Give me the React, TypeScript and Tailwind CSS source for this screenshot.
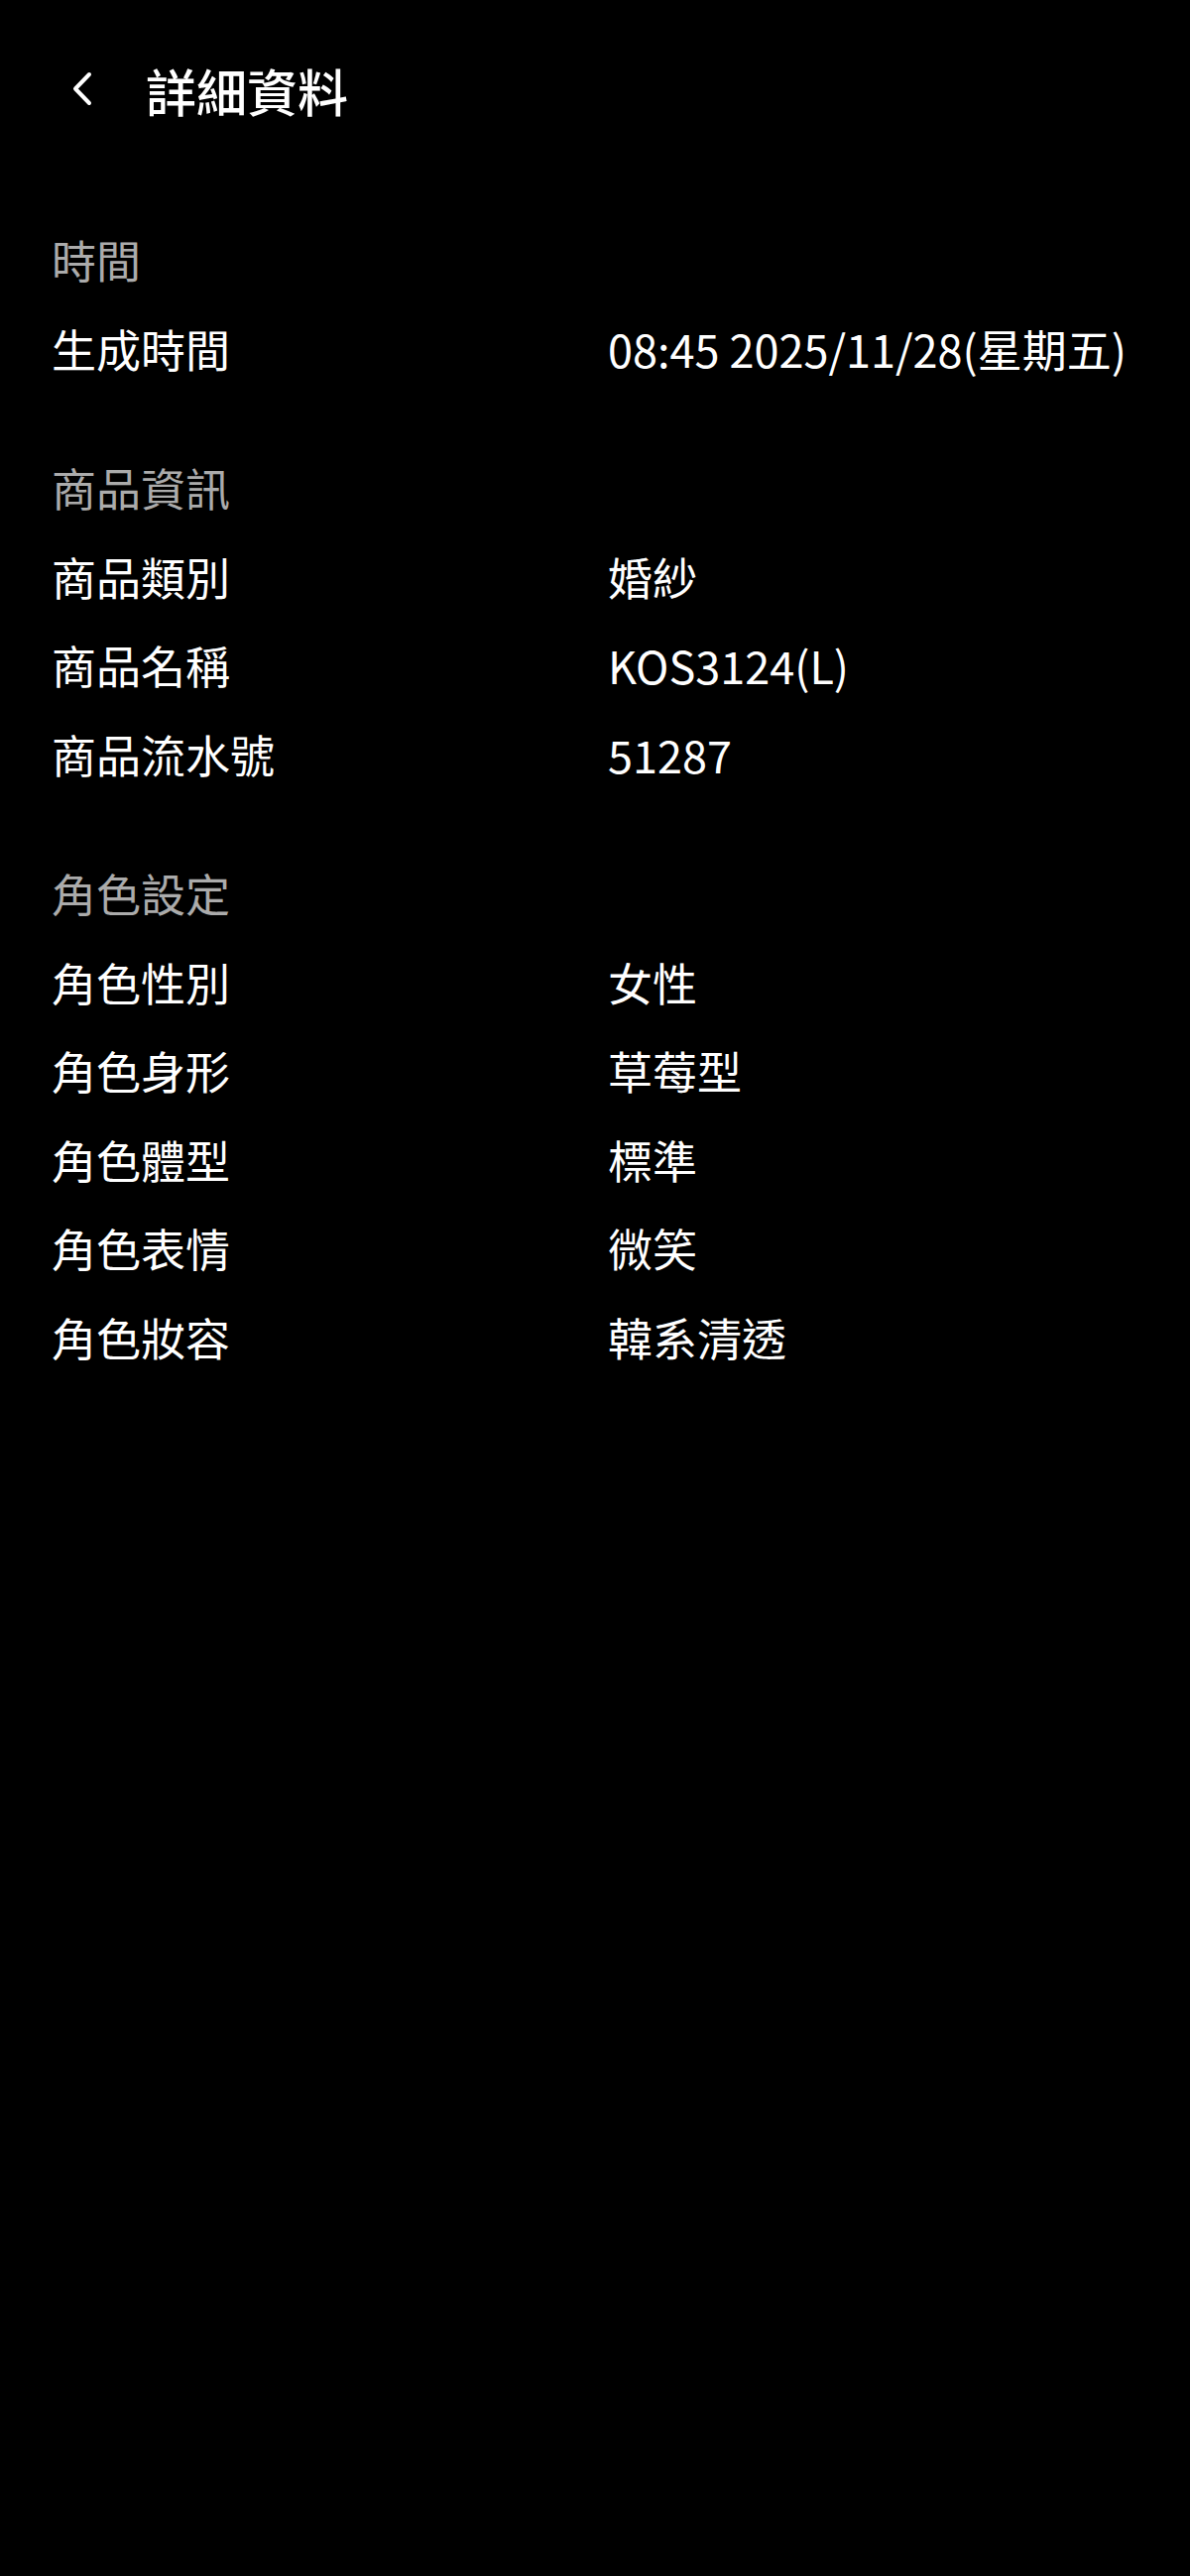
import { Fragment } from 'react'

interface Row {
  label: string
  value: string
}

interface Section {
  title: string
  rows: Row[]
}

const SECTIONS: Section[] = [
  {
    title: '時間',
    rows: [{ label: '生成時間', value: '08:45 2025/11/28(星期五)' }],
  },
  {
    title: '商品資訊',
    rows: [
      { label: '商品類別', value: '婚紗' },
      { label: '商品名稱', value: 'KOS3124(L)' },
      { label: '商品流水號', value: '51287' },
    ],
  },
  {
    title: '角色設定',
    rows: [
      { label: '角色性別', value: '女性' },
      { label: '角色身形', value: '草莓型' },
      { label: '角色體型', value: '標準' },
      { label: '角色表情', value: '微笑' },
      { label: '角色妝容', value: '韓系清透' },
    ],
  },
]

function BackIcon() {
  return (
    <svg width="24" height="40" viewBox="0 0 24 40" fill="none" className="block">
      <path d="M18 5 L4 19.5 L18 34" stroke="white" strokeWidth="4" strokeLinecap="round" strokeLinejoin="round" />
    </svg>
  )
}

function DetailSection({ section }: { section: Section }) {
  return (
    <div className="mt-[51px] first:mt-0">
      <div className="h-[89.5px] flex items-center text-[45px] text-[#ababab] leading-none">
        {section.title}
      </div>
      {section.rows.map((row) => (
        <div key={row.label} className="h-[89.5px] grid grid-cols-[561px_1fr] items-center text-[45px] text-white leading-none">
          <span>{row.label}</span>
          <span>{row.value}</span>
        </div>
      ))}
    </div>
  )
}

export default function App() {
  return (
    <div
      className="min-h-[2598px] w-full bg-black text-white"
      style={{ fontFamily: '"Noto Sans CJK TC", "Noto Sans", sans-serif' }}
    >
      <div className="h-[182px] flex items-center pl-[72px]">
        <div className="-mt-[3px]">
          <BackIcon />
        </div>
        <h1 className="ml-[51px] text-[51px] font-medium leading-none text-white">詳細資料</h1>
      </div>

      <div className="pt-[35px] px-[52px]">
        {SECTIONS.map((section) => (
          <Fragment key={section.title}>
            <DetailSection section={section} />
          </Fragment>
        ))}
      </div>
    </div>
  )
}
